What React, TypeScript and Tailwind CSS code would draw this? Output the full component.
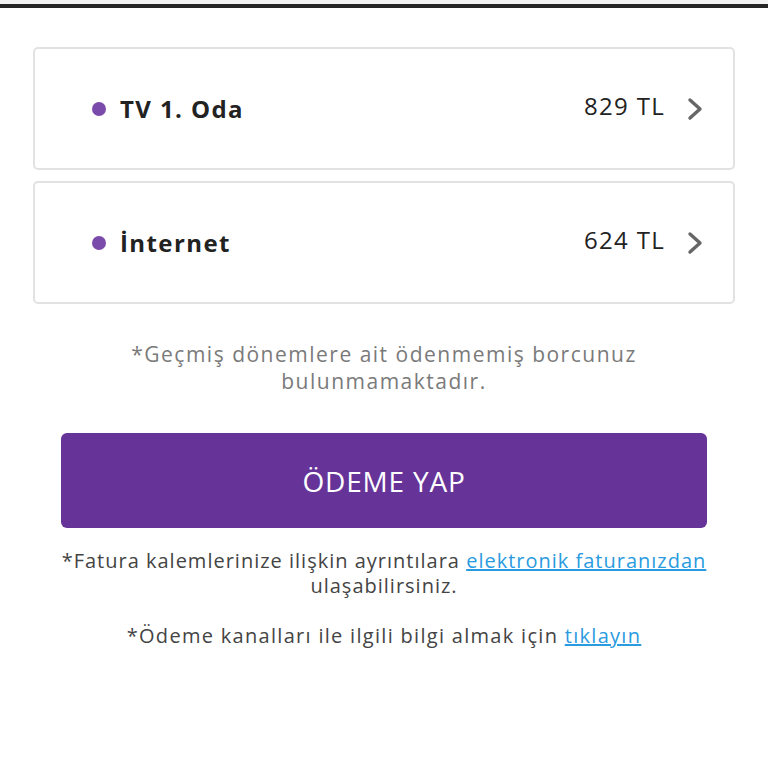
type Item = {
  name: string;
  price: string;
};

const items: Item[] = [
  { name: "TV 1. Oda", price: "829 TL" },
  { name: "İnternet", price: "624 TL" },
];

function Chevron() {
  return (
    <svg
      width="16"
      height="24"
      viewBox="0 0 16 24"
      fill="none"
      stroke="#666"
      strokeWidth="3.4"
      strokeLinecap="round"
      strokeLinejoin="round"
      className="ml-[22px]"
    >
      <polyline points="3,3 13,12 3,21" />
    </svg>
  );
}

function BillRow({ item }: { item: Item }) {
  return (
    <div className="flex h-[123px] items-center rounded-[5px] border-2 border-[#e2e2e2] bg-white pl-[57px] pr-[30px]">
      <span className="size-[14px] rounded-full bg-[#7b4bab]" />
      <span className="ml-[14px] text-[24px] font-bold tracking-[1.4px] text-[#222]">
        {item.name}
      </span>
      <span className="ml-auto -mt-[6px] text-[24px] tracking-[1.3px] text-[#222]">
        {item.price}
      </span>
      <Chevron />
    </div>
  );
}

export default function App() {
  return (
    <div className="min-h-[768px] bg-white font-['Open_Sans',sans-serif]">
      <div className="h-[4px] bg-[#f2f2f2]" />
      <div className="h-[4px] bg-[#262626]" />
      <div className="px-[33px] pt-[39px]">
        <div className="flex flex-col gap-[11px]">
          {items.map((item) => (
            <BillRow key={item.name} item={item} />
          ))}
        </div>
        <p className="mt-[37px] text-center text-[21px] leading-[27px] tracking-[1.5px] text-[#7a7a7a]">
          *Geçmiş dönemlere ait ödenmemiş borcunuz
          <br />
          bulunmamaktadır.
        </p>
        <div className="mt-[38px] px-[28px]">
          <button className="flex h-[95px] w-full items-center justify-center rounded-[6px] bg-[#663399] text-[28px] tracking-[0.8px] text-white">
            ÖDEME YAP
          </button>
        </div>
        <p className="mt-[20px] text-center text-[20px] leading-[25px] tracking-[1px] text-[#444]">
          *Fatura kalemlerinize ilişkin ayrıntılara{" "}
          <a href="#" className="text-[#2a9be0] underline">
            elektronik faturanızdan
          </a>
          <br />
          ulaşabilirsiniz.
        </p>
        <p className="mt-[25px] text-center text-[20px] leading-[25px] tracking-[1.3px] text-[#444]">
          *Ödeme kanalları ile ilgili bilgi almak için{" "}
          <a href="#" className="text-[#2a9be0] underline">
            tıklayın
          </a>
        </p>
      </div>
    </div>
  );
}
